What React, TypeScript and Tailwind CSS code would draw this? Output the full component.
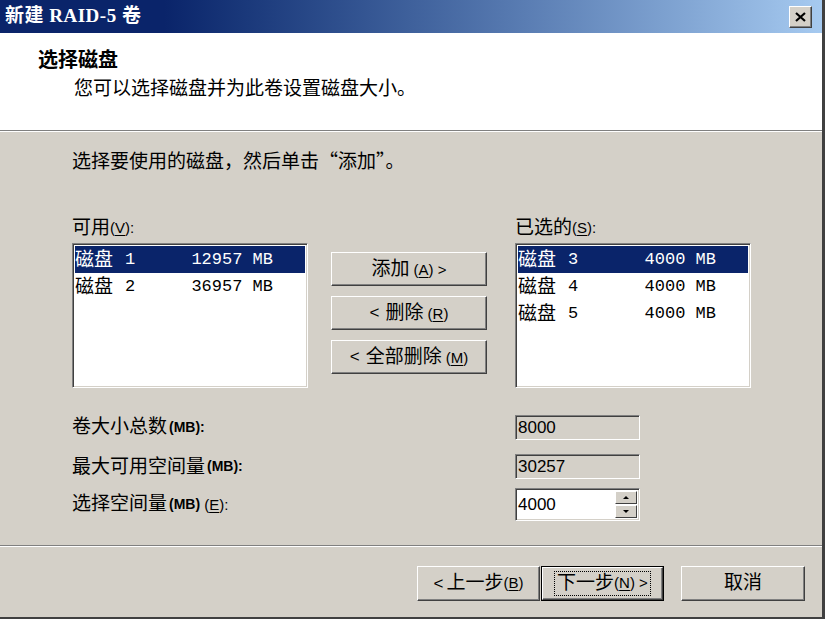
import React from "react";

const cjk = "font-['Liberation_Sans','Noto_Sans_CJK_SC',sans-serif]";
const mono = "font-['Liberation_Mono','Noto_Sans_CJK_SC',monospace]";

function Mn({ pre = "", k, post = "" }: { pre?: string; k: string; post?: string }) {
  return (
    <span className="text-[15px] font-['Liberation_Sans',sans-serif]">
      {pre}(<span className="underline underline-offset-2">{k}</span>){post}
    </span>
  );
}

function Btn({
  children,
  className = "",
}: {
  children: React.ReactNode;
  className?: string;
}) {
  return (
    <div
      className={`flex items-center justify-center bg-[#d4d0c8] border border-t-white border-l-white border-r-[#404040] border-b-[#404040] shadow-[inset_-1px_-1px_0_#808080] text-[19px] text-black ${className}`}
    >
      {children}
    </div>
  );
}

const sunken =
  "border border-t-[#808080] border-l-[#808080] border-r-white border-b-white shadow-[inset_1px_1px_0_#404040,inset_-1px_-1px_0_#d4d0c8]";

function ListBox({
  rows,
}: {
  rows: { name: string; size: string; sel?: boolean }[];
}) {
  return (
    <div className={`w-[236px] h-[145px] bg-white ${sunken} pt-[2px] px-[2px]`}>
      {rows.map((r) => (
        <div
          key={r.name}
          className={`flex items-center justify-between h-[27px] pr-[32px] ${
            r.sel ? "bg-[#0a246a] text-white" : "text-black"
          }`}
        >
          <span className="flex items-center">
            <span className={`${cjk} text-[19px] leading-none`}>磁盘</span>
            <span className={`${mono} text-[17px] leading-none ml-[12px]`}>
              {r.name.replace("磁盘 ", "")}
            </span>
          </span>
          <span className={`${mono} text-[17px] leading-none`}>{r.size}</span>
        </div>
      ))}
    </div>
  );
}

export default function App() {
  return (
    <div
      className={`w-[825px] h-[619px] bg-[#d4d0c8] flex flex-col overflow-hidden border-r-[3px] border-b-[2px] border-r-[#404040] border-b-[#404040] ${cjk}`}
    >
      {/* Title bar */}
      <div className="h-[33px] shrink-0 flex items-center justify-between bg-gradient-to-r from-[#0a246a] from-20% to-[#a6caf0] pl-[5px] pr-[10px]">
        <span className="text-white font-bold text-[19px] font-['Liberation_Serif','Noto_Sans_CJK_SC',serif] tracking-[0.5px]">
          新建 RAID-5 卷
        </span>
        <div className="w-[23px] h-[22px] bg-[#d4d0c8] border border-t-white border-l-white border-r-[#404040] border-b-[#404040] shadow-[inset_-1px_-1px_0_#808080] flex items-center justify-center">
          <svg width="11" height="10" viewBox="0 0 11 10">
            <path d="M1 1 L10 9 M10 1 L1 9" stroke="black" strokeWidth="2.2" />
          </svg>
        </div>
      </div>

      {/* Header */}
      <div className="h-[97px] shrink-0 bg-white pt-[15px] pl-[38px]">
        <div className="text-[20px] font-bold leading-[24px] text-black">选择磁盘</div>
        <div className="text-[19px] leading-[24px] mt-[5px] pl-[36px] text-black">
          您可以选择磁盘并为此卷设置磁盘大小。
        </div>
      </div>
      <div className="h-[2px] shrink-0 border-t border-t-[#808080] border-b border-b-white" />

      {/* Main */}
      <div className="flex-1 pl-[72px] pt-[17px] text-black">
        <div className="text-[19px] leading-[22px] font-['Noto_Sans_CJK_SC',sans-serif]">
          选择要使用的磁盘，然后单击“添加”。
        </div>

        <div className="flex mt-[46px]">
          <div className="flex flex-col">
            <div className="h-[22px] leading-[22px] text-[19px] mb-[4px] flex items-center">
              可用 <Mn k="V" post=":" />
            </div>
            <ListBox
              rows={[
                { name: "磁盘 1", size: "12957 MB", sel: true },
                { name: "磁盘 2", size: "36957 MB" },
              ]}
            />
          </div>

          <div className="flex flex-col gap-[10px] pt-[35px] ml-[23px]">
            <Btn className="w-[156px] h-[34px]">
              添加<span className="ml-[4px]"><Mn k="A" post=" >" /></span>
            </Btn>
            <Btn className="w-[156px] h-[34px]">
              <span className="mr-[6px] text-[17px]">&lt;</span>删除
              <span className="ml-[4px]"><Mn k="R" /></span>
            </Btn>
            <Btn className="w-[156px] h-[34px]">
              <span className="mr-[6px] text-[17px]">&lt;</span>全部删除
              <span className="ml-[4px]"><Mn k="M" /></span>
            </Btn>
          </div>

          <div className="flex flex-col ml-[28px]">
            <div className="h-[22px] leading-[22px] text-[19px] mb-[4px] flex items-center">
              已选的<Mn k="S" post=":" />
            </div>
            <ListBox
              rows={[
                { name: "磁盘 3", size: "4000 MB", sel: true },
                { name: "磁盘 4", size: "4000 MB" },
                { name: "磁盘 5", size: "4000 MB" },
              ]}
            />
          </div>
        </div>

        <div className="grid grid-cols-[443px_125px] mt-[25px] gap-y-[11px] items-center">
          <div className="text-[19px] flex items-center">
            卷大小总数<span className="text-[14px] font-bold font-['Liberation_Sans',sans-serif] ml-[2px]">(MB):</span>
          </div>
          <div className={`h-[25px] ${sunken} flex items-center pl-[2px] text-[17px] font-['Liberation_Sans',sans-serif]`}>
            8000
          </div>
          <div className="text-[19px] flex items-center">
            最大可用空间量<span className="text-[14px] font-bold font-['Liberation_Sans',sans-serif] ml-[2px]">(MB):</span>
          </div>
          <div className={`h-[25px] ${sunken} flex items-center pl-[2px] text-[17px] font-['Liberation_Sans',sans-serif]`}>
            30257
          </div>
          <div className="text-[19px] flex items-center -mt-[4px]">
            选择空间量<span className="text-[14px] font-bold font-['Liberation_Sans',sans-serif] ml-[2px]">(MB)</span>
            <span className="ml-[4px]"><Mn k="E" post=":" /></span>
          </div>
          <div className={`h-[33px] -mt-[4px] bg-white ${sunken} flex items-center justify-between pl-[2px] pr-[2px]`}>
            <span className="text-[17px] font-['Liberation_Sans',sans-serif]">4000</span>
            <div className="flex flex-col gap-[1px]">
              <div className="w-[22px] h-[13px] bg-[#d4d0c8] border border-t-white border-l-white border-r-[#404040] border-b-[#404040] flex items-center justify-center">
                <svg width="6" height="3" viewBox="0 0 6 3"><path d="M0 3 L3 0 L6 3Z" fill="black" /></svg>
              </div>
              <div className="w-[22px] h-[13px] bg-[#d4d0c8] border border-t-white border-l-white border-r-[#404040] border-b-[#404040] flex items-center justify-center">
                <svg width="6" height="3" viewBox="0 0 6 3"><path d="M0 0 L6 0 L3 3Z" fill="black" /></svg>
              </div>
            </div>
          </div>
        </div>
      </div>

      {/* Footer */}
      <div className="h-[2px] shrink-0 border-t border-t-[#808080] border-b border-b-white" />
      <div className="h-[70px] shrink-0 flex justify-end items-start pt-[19px] pr-[17px] text-black">
        <Btn className="w-[123px] h-[35px]">
          <span className="mr-[3px] text-[17px]">&lt;</span>上一步<Mn k="B" />
        </Btn>
        <div className="w-[123px] h-[35px] ml-[1px] border border-black">
          <Btn className="w-full h-full">
            <div className="border border-dotted border-black px-[2px] flex items-center h-[25px]">
              下一步<Mn k="N" post=" >" />
            </div>
          </Btn>
        </div>
        <Btn className="w-[124px] h-[35px] ml-[17px]">取消</Btn>
      </div>
    </div>
  );
}
